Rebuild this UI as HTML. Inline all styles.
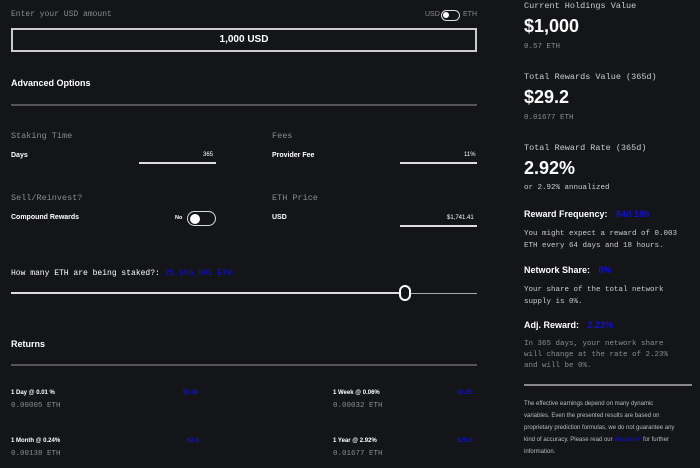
<!DOCTYPE html>
<html><head><style>
*{margin:0;padding:0;box-sizing:border-box}
body{width:700px;height:468px;background:#131519;color:#fff;font-family:"Liberation Sans",sans-serif;position:relative;overflow:hidden}
.a{position:absolute;white-space:nowrap}
.m{font-family:"Liberation Mono",monospace}
.g{color:#8a8c90}
.b{font-weight:bold}
.blue{color:#1010d8}
.line{position:absolute;height:2px;background:#ddd}
.hr{position:absolute;height:2px;background:#555}
</style></head><body>
<div class="a m g" style="left:11px;top:10px;font-size:8px">Enter your USD amount</div>
<div class="a g" style="left:425px;top:11px;font-size:7px">USD</div>
<div class="a" style="left:441px;top:10px;width:19px;height:11px;border:1.5px solid #ddd;border-radius:6px"><div style="position:absolute;left:1px;top:1px;width:6px;height:6px;background:#fff;border-radius:50%"></div></div>
<div class="a g" style="left:463px;top:11px;font-size:7px">ETH</div>
<div class="a" style="left:11px;top:28px;width:466px;height:24px;border:2px solid #ccc;text-align:center;line-height:20px;font-size:10px;font-weight:bold">1,000 USD</div>
<div class="a b" style="left:11px;top:78px;font-size:9px">Advanced Options</div>
<div class="hr" style="left:11px;top:104px;width:466px"></div>
<div class="a m g" style="left:11px;top:131px;font-size:8.5px">Staking Time</div>
<div class="a b" style="left:11px;top:152px;font-size:7px">Days</div>
<div class="a" style="left:203px;top:152px;font-size:6px">365</div>
<div class="line" style="left:139px;top:162px;width:77px;height:1.5px"></div>
<div class="a m g" style="left:272px;top:131px;font-size:8.5px">Fees</div>
<div class="a b" style="left:272px;top:152px;font-size:7px">Provider Fee</div>
<div class="a" style="left:464px;top:152px;font-size:6px">11%</div>
<div class="line" style="left:400px;top:162px;width:77px;height:1.5px"></div>
<div class="a m g" style="left:11px;top:193px;font-size:8.5px">Sell/Reinvest?</div>
<div class="a b" style="left:11px;top:214px;font-size:7px">Compound Rewards</div>
<div class="a b" style="left:175px;top:215px;font-size:5.5px">No</div>
<div class="a" style="left:187px;top:211px;width:29px;height:15px;border:1.5px solid #ddd;border-radius:8px"><div style="position:absolute;left:2px;top:1.5px;width:10px;height:10px;background:#fff;border-radius:50%"></div></div>
<div class="a m g" style="left:272px;top:193px;font-size:8.5px">ETH Price</div>
<div class="a b" style="left:272px;top:214px;font-size:7px">USD</div>
<div class="a" style="left:447px;top:215px;font-size:6px">$1,741.41</div>
<div class="line" style="left:400px;top:225px;width:77px;height:1.5px"></div>
<div class="a m" style="left:11px;top:269px;font-size:8px">How many ETH are being staked?: <span class="blue">25,656,992 ETH</span></div>
<div class="line" style="left:11px;top:292px;width:394px;height:2px"></div>
<div class="line" style="left:405px;top:293px;width:72px;height:1px;background:#aaa"></div>
<div class="a" style="left:399px;top:285px;width:12px;height:16px;border:2.5px solid #fff;border-radius:7px;background:#131519"></div>
<div class="a b" style="left:11px;top:339px;font-size:9px">Returns</div>
<div class="hr" style="left:11px;top:364px;width:466px"></div>
<div class="a b" style="left:11px;top:390px;font-size:6px">1 Day @ 0.01 %</div>
<div class="a b blue" style="left:183px;top:390px;font-size:6px">$0.08</div>
<div class="a m g" style="left:11px;top:402px;font-size:7.5px">0.00005 ETH</div>
<div class="a b" style="left:333px;top:390px;font-size:6px">1 Week @ 0.06%</div>
<div class="a b blue" style="left:457px;top:390px;font-size:6px">$0.56</div>
<div class="a m g" style="left:333px;top:402px;font-size:7.5px">0.00032 ETH</div>
<div class="a b" style="left:11px;top:438px;font-size:6px">1 Month @ 0.24%</div>
<div class="a b blue" style="left:187px;top:438px;font-size:6px">$2.4</div>
<div class="a m g" style="left:11px;top:450px;font-size:7.5px">0.00138 ETH</div>
<div class="a b" style="left:333px;top:438px;font-size:6px">1 Year @ 2.92%</div>
<div class="a b blue" style="left:457px;top:438px;font-size:6px">$29.2</div>
<div class="a m g" style="left:333px;top:450px;font-size:7.5px">0.01677 ETH</div>

<div class="a m" style="left:524px;top:1px;font-size:8.5px;color:#ccc">Current Holdings Value</div>
<div class="a b" style="left:524px;top:16px;font-size:18px">$1,000</div>
<div class="a m g" style="left:524px;top:43px;font-size:7.5px">0.57 ETH</div>
<div class="a m" style="left:524px;top:72px;font-size:8.5px;color:#ccc">Total Rewards Value (365d)</div>
<div class="a b" style="left:524px;top:87px;font-size:18px">$29.2</div>
<div class="a m g" style="left:524px;top:114px;font-size:7.5px">0.01677 ETH</div>
<div class="a m" style="left:524px;top:143px;font-size:8.5px;color:#ccc">Total Reward Rate (365d)</div>
<div class="a b" style="left:524px;top:158px;font-size:18px">2.92%</div>
<div class="a m" style="left:524px;top:184px;font-size:7.5px;color:#ccc">or 2.92% annualized</div>
<div class="a b" style="left:524px;top:209px;font-size:9px">Reward Frequency: <span class="blue" style="margin-left:6px">64d 18h</span></div>
<div class="a m" style="left:524px;top:228px;font-size:7.5px;line-height:12px;color:#ccc">You might expect a reward of 0.003<br>ETH every 64 days and 18 hours.</div>
<div class="a b" style="left:524px;top:265px;font-size:9px">Network Share: <span class="blue" style="margin-left:6px">0%</span></div>
<div class="a m" style="left:524px;top:284px;font-size:7.5px;line-height:12px;color:#ccc">Your share of the total network<br>supply is 0%.</div>
<div class="a b" style="left:524px;top:320px;font-size:9px">Adj. Reward: <span class="blue" style="margin-left:6px">2.23%</span></div>
<div class="a m g" style="left:524px;top:339px;font-size:7.5px;line-height:11px">In 365 days, your network share<br>will change at the rate of 2.23%<br>and will be 0%.</div>
<div class="hr" style="left:524px;top:384px;width:168px;background:#888"></div>
<div class="a" style="left:524px;top:398px;font-size:6px;line-height:12px;color:#bbb">The effective earnings depend on many dynamic<br>variables. Even the presented results are based on<br>proprietary prediction formulas, we do not guarantee any<br>kind of accuracy. Please read our <span class="blue">disclaimer</span> for further<br>information.</div>
</body></html>
